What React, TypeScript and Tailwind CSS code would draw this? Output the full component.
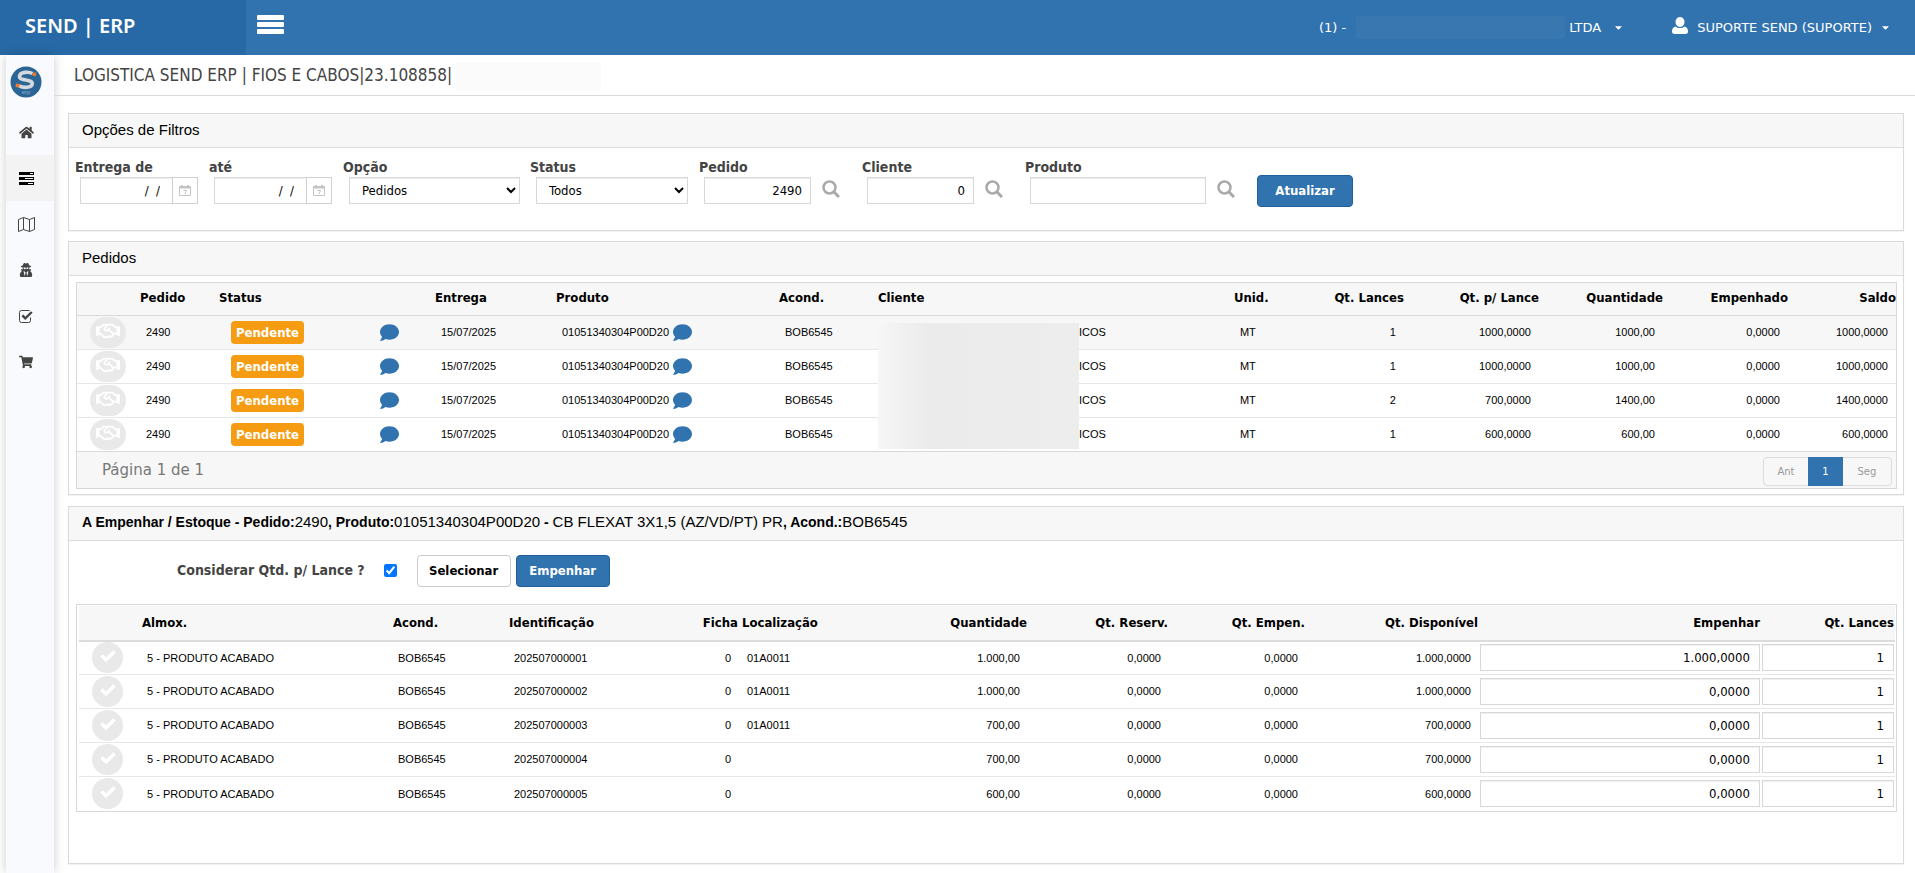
import React, { useState } from "react";
import { FaHome, FaUserSecret, FaShoppingCart, FaComment, FaCaretDown, FaRegHandshake } from "react-icons/fa";

interface Pedido {
  lances: string;
  porLance: string;
  quantidade: string;
  saldo: string;
}

interface Estoque {
  identificacao: string;
  localizacao: string;
  quantidade: string;
  disponivel: string;
  empenhar: string;
}

const pedidos: Pedido[] = [
  { lances: "1", porLance: "1000,0000", quantidade: "1000,00", saldo: "1000,0000" },
  { lances: "1", porLance: "1000,0000", quantidade: "1000,00", saldo: "1000,0000" },
  { lances: "2", porLance: "700,0000", quantidade: "1400,00", saldo: "1400,0000" },
  { lances: "1", porLance: "600,0000", quantidade: "600,00", saldo: "600,0000" },
];

const estoque: Estoque[] = [
  { identificacao: "202507000001", localizacao: "01A0011", quantidade: "1.000,00", disponivel: "1.000,0000", empenhar: "1.000,0000" },
  { identificacao: "202507000002", localizacao: "01A0011", quantidade: "1.000,00", disponivel: "1.000,0000", empenhar: "0,0000" },
  { identificacao: "202507000003", localizacao: "01A0011", quantidade: "700,00", disponivel: "700,0000", empenhar: "0,0000" },
  { identificacao: "202507000004", localizacao: "", quantidade: "700,00", disponivel: "700,0000", empenhar: "0,0000" },
  { identificacao: "202507000005", localizacao: "", quantidade: "600,00", disponivel: "600,0000", empenhar: "0,0000" },
];

const cell = "px-2 font-['Liberation_Sans',Arial,sans-serif] text-[11px]";
const field = "h-[27px] border border-[#d8d8d8] bg-white text-[13px] font-normal text-black shadow-[inset_0_1px_1px_#0001] outline-none";
const primary = "h-8 rounded border border-[#1f5f9e] bg-[#3173af] text-[13px] font-bold text-white";

const TasksIcon = () => (
  <svg viewBox="0 0 15 13" className="h-[13px] w-[15px]" fill="currentColor">
    <path fillRule="evenodd" d="M0 0h15v3H0zM11 1v1h3V1zM0 5h15v3H0zM6 6v1h8V6zM0 10h15v3H0zM9 11v1h5v-1z" />
  </svg>
);

const MapIcon = () => (
  <svg viewBox="0 0 17 15" className="h-[15px] w-[17px]" fill="none" stroke="currentColor">
    <path d="m.5 2.500 5-2 6 2 5-2v12l-5 2-6-2-5 2zM5.500.5v12M11.500 2.500v12" />
  </svg>
);

const CheckSquareIcon = () => (
  <svg viewBox="0 0 14 13" className="h-[13px] w-[14px]" fill="none" stroke="currentColor">
    <path d="M11.5 7.5v3a2 2 0 0 1-2 2h-7a2 2 0 0 1-2-2v-8a2 2 0 0 1 2-2h8" />
    <path d="M3.3 5.3 6.3 8.4 12.8 2" strokeWidth="2.4" />
  </svg>
);

const CheckIcon = () => (
  <svg viewBox="0 0 16 12" className="mb-1 h-3 w-4" fill="none" stroke="currentColor" strokeWidth="3.5">
    <path d="m1.500 5.500 4.500 4.300L14.500 1.500" />
  </svg>
);

const CalendarIcon = () => (
  <svg viewBox="0 0 12 11" className="h-[11px] w-3" fill="none" stroke="#c4c4c4">
    <path d="M.5 1.5h11v9H.5z" />
    <path d="M0 2.5h12M3 0v2M9 0v2" strokeWidth="2" />
    <path d="M4.5 5.5h3l-1.500 3.500" />
  </svg>
);

const SearchIcon = () => (
  <svg viewBox="0 0 18 18" className="size-[18px]" fill="none" stroke="#aaa">
    <circle cx="7.500" cy="7.500" r="6" strokeWidth="2.500" />
    <path d="m12 12 5 5" strokeWidth="3" />
  </svg>
);

const UserIcon = () => (
  <svg viewBox="0 0 16 17" className="h-[17px] w-4" fill="currentColor">
    <ellipse cx="8" cy="5" rx="4.500" ry="5" />
    <path d="M3.500 9.500C1 10 0 12 0 14.500 0 16 1 17 2.500 17h11c1.500 0 2.500-1 2.500-2.500 0-2.500-1-4.500-3.500-5-2.500 2-6.500 2-9 0z" />
  </svg>
);

const Logo = () => (
  <svg viewBox="0 0 32 32" className="size-8">
    <circle cx="16" cy="16" r="15.500" fill="#2b6596" />
    <path d="M22.500 7.500C19 5.500 10 5.500 9.500 10.300c-.4 5 13 2.400 12.800 7.400-.3 4.600-9.300 4.300-13.300 2" fill="none" stroke="#d4d9de" strokeWidth="3.600" />
    <path d="m22 7 4.500-.5-1 4-3-1zM6 17.500l4 .5-1 3.500-3.500-.5z" fill="#ee7b30" />
    <text x="16" y="27.500" textAnchor="middle" fontSize="6" fill="#8fb0cc" fontFamily="Liberation Sans, sans-serif">erp</text>
  </svg>
);

function Panel({ title, className = "", children }: { title: React.ReactNode; className?: string; children: React.ReactNode }) {
  return (
    <section className={"border border-[#dadada] bg-white shadow-[0_1px_1px_#0000000d] " + className}>
      <h2 className="flex h-[34px] items-center border-b border-[#dadada] bg-[#f7f7f7] px-[13px] pb-px font-['Liberation_Sans',Arial,sans-serif] text-[15px]">
        <span>{title}</span>
      </h2>
      {children}
    </section>
  );
}

function Sidebar() {
  const items = [
    { label: "Início", icon: <FaHome className="size-[15px]" /> },
    { label: "Logística", icon: <TasksIcon />, active: true },
    { label: "Mapa", icon: <MapIcon /> },
    { label: "Usuários", icon: <FaUserSecret className="size-[14px]" /> },
    { label: "Tarefas", icon: <CheckSquareIcon /> },
    { label: "Compras", icon: <FaShoppingCart className="size-[14px]" /> },
  ];
  return (
    <aside className="ml-[6px] w-12 shrink-0 bg-[#f9fafd] shadow-[0_0_10px_#0003]">
      <a href="#" aria-label="SEND" className="block pt-[11px] pb-[11px] pl-1">
        <Logo />
      </a>
      <nav>
        {items.map((item) => (
          <a
            key={item.label}
            href="#"
            aria-label={item.label}
            className={"flex h-[46px] items-center justify-center pr-2 " + (item.active ? "bg-[#f3f3f3] text-black" : "text-[#444]")}
          >
            {item.icon}
          </a>
        ))}
      </nav>
    </aside>
  );
}

function DateField({ id, label }: { id: string; label: string }) {
  return (
    <div className="w-[134px]">
      <label htmlFor={id} className="block">{label}</label>
      <div className="flex pl-[5px]">
        <input id={id} defaultValue="/  /" className={field + " w-[93px] pr-3 text-right whitespace-pre"} />
        <button aria-label="Calendário" className="-ml-px flex w-[26px] items-center justify-center border border-[#d0d0d0]">
          <CalendarIcon />
        </button>
      </div>
    </div>
  );
}

function SearchField({ id, label, value, width }: { id: string; label: string; value: string; width: string }) {
  return (
    <div className="flex items-end">
      <div>
        <label htmlFor={id} className="block">{label}</label>
        <div className="pl-[5px]">
          <input id={id} defaultValue={value} className={field + " pr-2 text-right " + width} />
        </div>
      </div>
      <button aria-label={"Buscar " + label} className="flex h-[27px] w-[51px] items-start pt-[3px] pl-[11px]">
        <SearchIcon />
      </button>
    </div>
  );
}

function Filtros() {
  return (
    <Panel title="Opções de Filtros">
      <div className="flex items-end pt-[9px] pb-[26px] pl-[6px] text-[14px] leading-5 font-bold text-[#444]">
        <DateField id="de" label="Entrega de" />
        <DateField id="ate" label="até" />
        <div className="w-[187px]">
          <label htmlFor="opcao" className="block">Opção</label>
          <div className="pl-[6px]">
            <select id="opcao" className={field + " w-[171px] pl-2"}>
              <option>Pedidos</option>
            </select>
          </div>
        </div>
        <div className="w-[169px]">
          <label htmlFor="status" className="block">Status</label>
          <div className="pl-[6px]">
            <select id="status" className={field + " w-[152px] pl-2"}>
              <option>Todos</option>
            </select>
          </div>
        </div>
        <SearchField id="pedido" label="Pedido" value="2490" width="w-[107px]" />
        <SearchField id="cliente" label="Cliente" value="0" width="w-[107px]" />
        <SearchField id="produto" label="Produto" value="" width="w-[176px]" />
        <button className={primary + " -mb-[3px] w-24"}>Atualizar</button>
      </div>
    </Panel>
  );
}

function Pedidos() {
  const th = "pl-0.5 pb-0.5";
  return (
    <Panel title="Pedidos" className="mt-[10px]">
      <div className="mt-[6px] mr-[6px] mb-[5px] ml-[7px] border border-[#d8d8d8]">
        <table className="w-full table-fixed">
          <colgroup>
            <col className="w-[61px]" />
            <col className="w-[79px]" />
            <col className="w-[216px]" />
            <col className="w-[121px]" />
            <col className="w-[223px]" />
            <col className="w-[99px]" />
            <col />
            <col className="w-[67px]" />
            <col className="w-[105px]" />
            <col className="w-[135px]" />
            <col className="w-[124px]" />
            <col className="w-[125px]" />
            <col className="w-[108px]" />
          </colgroup>
          <thead>
            <tr className="h-8 border-b border-[#d8d8d8] bg-[#f7f7f7] text-left text-[13px]">
              <th />
              <th className={th}>Pedido</th>
              <th className={th}>Status</th>
              <th className={th}>Entrega</th>
              <th className={th}>Produto</th>
              <th className={th}>Acond.</th>
              <th className={th}>Cliente</th>
              <th className={th}>Unid.</th>
              <th className={th + " text-right"}>Qt. Lances</th>
              <th className={th + " text-right"}>Qt. p/ Lance</th>
              <th className={th + " text-right"}>Quantidade</th>
              <th className={th + " text-right"}>Empenhado</th>
              <th className={th + " text-right"}>Saldo</th>
            </tr>
          </thead>
          <tbody>
            {pedidos.map((p, i) => (
              <tr key={i} className="h-[34px] border-b border-[#e7e7e7] last:border-[#d8d8d8] first:bg-[#f7f7f7]">
                <td className="pl-[13px]">
                  <button aria-label="Empenhar pedido" className="flex h-[31px] w-9 items-center justify-center rounded-full bg-[#e9e9e9] pb-0.5 text-white">
                    <FaRegHandshake className="size-6" />
                  </button>
                </td>
                <td className={cell}>2490</td>
                <td>
                  <div className="flex items-center justify-between pr-[34px] pl-[14px]">
                    <span className="rounded-sm bg-[#f59c13] px-[5px] text-[13px] leading-[23px] font-bold text-white">Pendente</span>
                    <FaComment className="size-[19px] text-[#3173af]" />
                  </div>
                </td>
                <td className={cell}>15/07/2025</td>
                <td className={cell}>
                  <div className="flex items-center gap-1">
                    01051340304P00D20
                    <FaComment className="size-[19px] text-[#3173af]" />
                  </div>
                </td>
                <td className={cell}>BOB6545</td>
                <td className={"relative " + cell}>
                  {i === 0 && (
                    <div className="absolute top-[7px] left-0.5 h-[126px] w-[201px] bg-linear-to-r from-[#f6f6f6] via-[#ebebeb] via-25% to-[#ededed]" />
                  )}
                  <span className="pl-[195px]">ICOS</span>
                </td>
                <td className={cell}>MT</td>
                <td className={cell + " text-right"}>{p.lances}</td>
                <td className={cell + " text-right"}>{p.porLance}</td>
                <td className={cell + " text-right"}>{p.quantidade}</td>
                <td className={cell + " text-right"}>0,0000</td>
                <td className={cell + " text-right"}>{p.saldo}</td>
              </tr>
            ))}
          </tbody>
        </table>
        <div className="flex h-9 items-center justify-between bg-[#f7f7f7] pt-[3px] pr-1 pl-[25px] font-['DejaVu_Sans',Verdana,sans-serif]">
          <span className="pb-0.5 text-[15px] text-[#777]">Página 1 de 1</span>
          <div className="flex h-[29px] rounded border border-[#dcdcdc] text-[10px] text-[#999]">
            <button className="w-11">Ant</button>
            <button className="-my-px w-[35px] bg-[#3173af] text-white">1</button>
            <button className="w-12">Seg</button>
          </div>
        </div>
      </div>
    </Panel>
  );
}

function EstoquePanel() {
  const [considerar, setConsiderar] = useState(true);
  const th = "pl-[3px] pr-px";
  const title = (
    <>
      <b className="text-[14px]">A Empenhar / Estoque - Pedido:</b>2490<b className="text-[14px]">, Produto:</b>01051340304P00D20
      <b className="text-[14px]"> - </b>CB FLEXAT 3X1,5 (AZ/VD/PT) PR<b className="text-[14px]">, Acond.:</b>BOB6545
    </>
  );
  return (
    <Panel title={title} className="mt-[11px]">
      <div className="flex items-center pt-[14px] pb-[17px] pl-[108px]">
        <label htmlFor="considerar" className="text-[14px] font-bold text-[#444]">Considerar Qtd. p/ Lance ?</label>
        <input
          id="considerar"
          type="checkbox"
          checked={considerar}
          onChange={(e) => setConsiderar(e.target.checked)}
          className="ml-[19px] size-[13px]"
        />
        <button className="ml-5 h-8 w-[94px] rounded border border-[#ccc] bg-white text-[13px] font-bold">Selecionar</button>
        <button className={primary + " ml-[5px] w-[94px]"}>Empenhar</button>
      </div>
      <div className="mr-[6px] mb-[51px] ml-[7px] border border-[#d8d8d8] pt-px pr-px pl-0.5">
        <table className="w-full table-fixed">
          <colgroup>
            <col className="w-[60px]" />
            <col className="w-[251px]" />
            <col className="w-[116px]" />
            <col className="w-[170px]" />
            <col className="w-[63px]" />
            <col className="w-[160px]" />
            <col className="w-[129px]" />
            <col className="w-[141px]" />
            <col className="w-[137px]" />
            <col className="w-[173px]" />
            <col />
            <col className="w-[134px]" />
          </colgroup>
          <thead>
            <tr className="h-[35px] border-b-2 border-[#dcdcdc] bg-[#f7f7f7] text-left text-[13px]">
              <th />
              <th className={th}>Almox.</th>
              <th className={th}>Acond.</th>
              <th className={th}>Identificação</th>
              <th className={th + " text-right"}>Ficha</th>
              <th className={th}>Localização</th>
              <th className={th + " text-right"}>Quantidade</th>
              <th className={th + " text-right"}>Qt. Reserv.</th>
              <th className={th + " text-right"}>Qt. Empen.</th>
              <th className={th + " text-right"}>Qt. Disponível</th>
              <th className={th + " text-right"}>Empenhar</th>
              <th className={th + " text-right"}>Qt. Lances</th>
            </tr>
          </thead>
          <tbody>
            {estoque.map((e) => (
              <tr key={e.identificacao} className="h-[34px] border-b border-[#e7e7e7] last:border-b-0">
                <td className="pl-[13px]">
                  <button aria-label={"Selecionar " + e.identificacao} className="flex size-[31px] items-center justify-center rounded-full bg-[#e9e9e9] text-white">
                    <CheckIcon />
                  </button>
                </td>
                <td className={cell}>5 - PRODUTO ACABADO</td>
                <td className={cell}>BOB6545</td>
                <td className={cell}>{e.identificacao}</td>
                <td className={cell + " text-right"}>0</td>
                <td className={cell}>{e.localizacao}</td>
                <td className={cell + " text-right"}>{e.quantidade}</td>
                <td className={cell + " text-right"}>0,0000</td>
                <td className={cell + " text-right"}>0,0000</td>
                <td className={cell + " text-right"}>{e.disponivel}</td>
                <td className="px-px">
                  <input aria-label="Empenhar" defaultValue={e.empenhar} className={field + " w-full pr-[9px] text-right"} />
                </td>
                <td className="px-px">
                  <input aria-label="Qt. Lances" defaultValue="1" className={field + " w-full pr-[9px] text-right"} />
                </td>
              </tr>
            ))}
          </tbody>
        </table>
      </div>
    </Panel>
  );
}

export default function App() {
  return (
    <div className="flex min-h-screen flex-col bg-white font-['DejaVu_Sans_Condensed','DejaVu_Sans',Tahoma,sans-serif] text-black">
      <header className="flex h-[55px] items-center bg-[#3173af] text-white">
        <div className="flex h-full w-[246px] items-center bg-[#2769a6] pb-1 pl-[25px] font-['Noto_Sans',sans-serif] text-[20px] font-semibold">SEND | ERP</div>
        <button aria-label="Menu" className="ml-[11px] flex w-[27px] flex-col gap-0.5 pb-[7px]">
          <span className="h-[5px] w-full rounded-[1px] bg-white" />
          <span className="h-[5px] w-full rounded-[1px] bg-white" />
          <span className="h-[5px] w-full rounded-[1px] bg-white" />
        </button>
        <div className="ml-auto flex items-center pr-[24px] font-['DejaVu_Sans',Verdana,sans-serif] text-[13px]">
          <button className="flex items-center">
            <span>(1) -</span>
            <span className="mr-1 ml-[10px] h-[23px] w-[209px] rounded-sm bg-[#3977b1]" />
            <span>LTDA</span>
            <FaCaretDown className="ml-3 size-[11px]" />
          </button>
          <button className="ml-12 flex items-center">
            <span className="mr-[9px] pb-1">
              <UserIcon />
            </span>
            <span>SUPORTE SEND (SUPORTE)</span>
            <FaCaretDown className="ml-2 size-[11px]" />
          </button>
        </div>
      </header>

      <div className="flex grow">
        <Sidebar />
        <div className="min-w-0 grow">
          <div className="flex h-[41px] items-center border-b border-[#dadada] pt-0.5 pl-5 text-[#444]">
            <h1 className="text-[17px]">LOGISTICA SEND ERP | FIOS E CABOS|23.108858|</h1>
            <span className="ml-1 h-7 w-[145px] bg-[#fbfbfb]" />
          </div>
          <main className="pt-[17px] pr-[11px] pl-[14px]">
            <Filtros />
            <Pedidos />
            <EstoquePanel />
          </main>
        </div>
      </div>
    </div>
  );
}
